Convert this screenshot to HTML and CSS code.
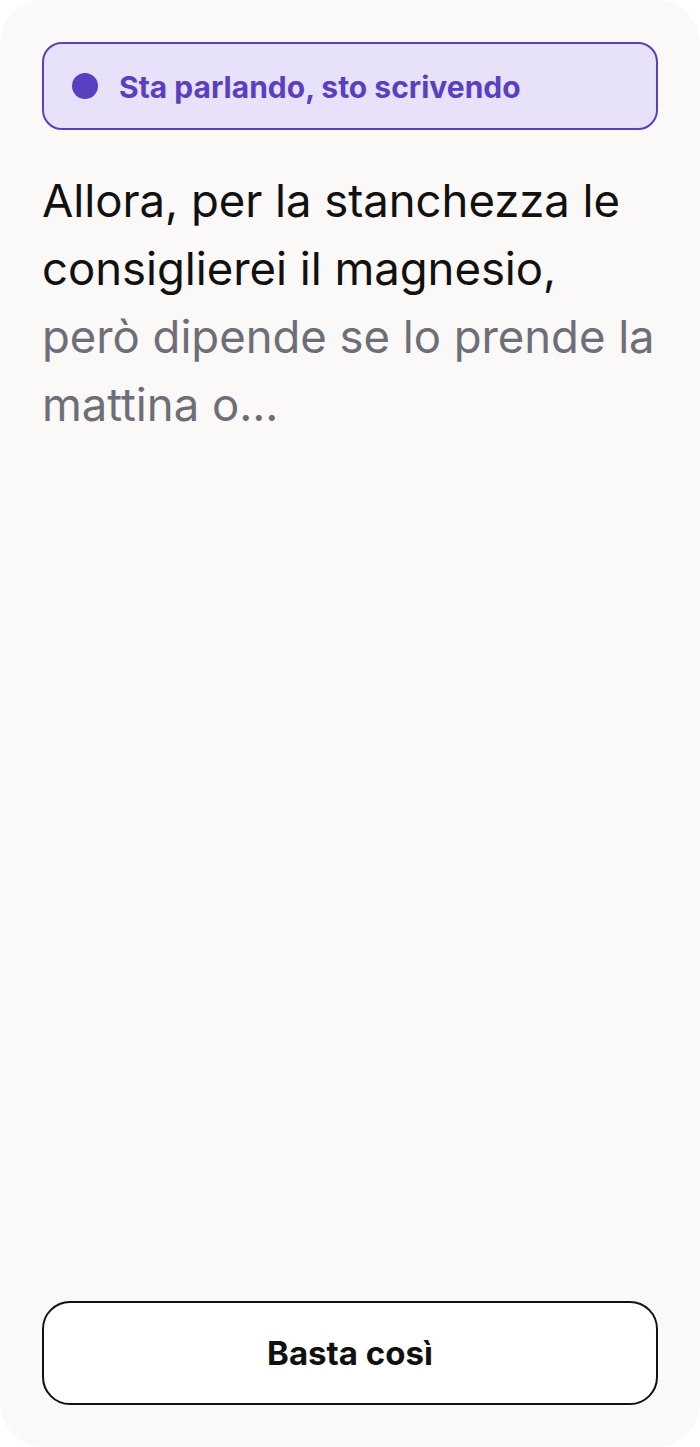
FILE: index.html
```html
<!DOCTYPE html>
<html lang="it">
<head>
  <meta charset="UTF-8" />
  <meta name="viewport" content="width=device-width, initial-scale=1.0"/>
  <title>Trascrizione</title>
  <link rel="stylesheet" href="styles.css">
</head>
<body>
  <div class="screen">
    <div class="status">
      <span class="status__dot"></span>
      <span class="status__label">Sta parlando, sto scrivendo</span>
    </div>

    <div class="transcript">
      <p class="transcript__final">Allora, per la stanchezza le consiglierei il magnesio,</p>
      <p class="transcript__live">però dipende se lo prende la mattina o...</p>
    </div>

    <button class="stop-btn">Basta così</button>
  </div>
</body>
</html>
```

FILE: styles.css
```css
* {
  margin: 0;
  padding: 0;
  box-sizing: border-box;
}

body {
  font-family: Inter, 'Noto Sans', sans-serif;
  background: #fff;
  color: #111;
}

.screen {
  width: 700px;
  height: 1447px;
  background: #faf9f7;
  border-radius: 44px;
  padding: 42px 42px 42px;
  display: flex;
  flex-direction: column;
}

.status {
  height: 88px;
  border: 2px solid #5a3fc0;
  background: #e7e1f9;
  border-radius: 20px;
  display: flex;
  align-items: center;
  gap: 21px;
  padding: 0 28px;
}

.status__dot {
  width: 26px;
  height: 26px;
  border-radius: 50%;
  background: #5a3fc0;
  flex-shrink: 0;
}

.status__label {
  color: #5a3fc0;
  font-size: 30px;
  font-weight: 700;
  line-height: 1;
  padding-top: 2px;
}

.transcript {
  margin-top: 37px;
  font-size: 45.5px;
  line-height: 68px;
  letter-spacing: -0.05px;
}

.transcript__final {
  color: #111;
}

.transcript__live {
  color: #6e6e78;
}

.stop-btn {
  margin-top: auto;
  height: 104px;
  border: 2px solid #111;
  border-radius: 28px;
  background: #fff;
  color: #111;
  font-family: inherit;
  font-size: 33px;
  font-weight: 700;
  cursor: pointer;
}
```
